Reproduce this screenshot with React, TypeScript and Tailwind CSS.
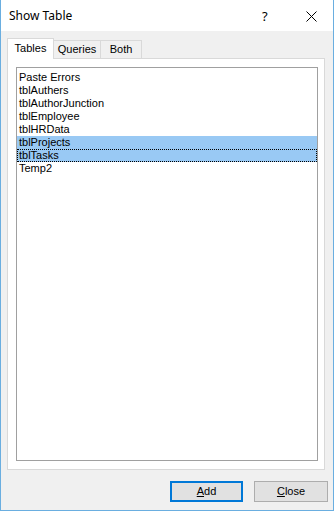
const TABLES = [
  "Paste Errors",
  "tblAuthers",
  "tblAuthorJunction",
  "tblEmployee",
  "tblHRData",
  "tblProjects",
  "tblTasks",
  "Temp2",
];

const SELECTED = ["tblProjects", "tblTasks"];

export default function App() {
  return (
    <div
      className="w-[334px] h-[511px] flex flex-col bg-[#f0f0f0] border border-t-0 border-[#6aaee0] text-black"
      style={{ fontFamily: "'Liberation Sans', Arial, sans-serif" }}
    >
      {/* title bar */}
      <div className="h-[31px] bg-white flex items-center relative shrink-0">
        <span className="pl-2 text-[12px] pt-[1px]" style={{ fontFamily: "'Noto Sans', 'Open Sans', sans-serif" }}>
          Show Table
        </span>
        <span className="absolute left-[261px] top-[7px] text-[13px]" style={{ fontFamily: "'Noto Sans', sans-serif" }}>
          ?
        </span>
        <svg className="absolute left-[305px] top-[11px]" width="11" height="11" viewBox="0 0 11 11">
          <path d="M0.5 0.5L10.5 10.5M10.5 0.5L0.5 10.5" stroke="#000" strokeWidth="1" />
        </svg>
      </div>

      {/* tabs */}
      <div className="flex items-end pl-[6px] pt-[7px] h-[27px] shrink-0 text-[11px]">
        <div className="w-[47px] h-[21px] bg-white border border-b-0 border-[#d9d9d9] flex items-center justify-center relative z-10 -mb-[1px] pb-[2px]">
          Tables
        </div>
        <div className="w-[47px] h-[18px] border border-l-0 border-b-0 border-[#d9d9d9] flex items-center justify-center">
          Queries
        </div>
        <div className="w-[41px] h-[18px] border border-l-0 border-b-0 border-[#d9d9d9] flex items-center justify-center">
          Both
        </div>
      </div>

      {/* tab panel */}
      <div className="ml-[6px] w-[318px] h-[412px] bg-white border border-[#d9d9d9] p-[8px] pr-[6px] shrink-0">
        <div className="w-[302px] h-[394px] border border-[#a0a0a0] pt-[3px] text-[11px]">
          {TABLES.map((t) => {
            const sel = SELECTED.includes(t);
            const focus = t === "tblTasks";
            return (
              <div
                key={t}
                className={`h-[13px] leading-[13px] pl-[2px] ${sel ? "bg-[#99c9f4]" : ""} ${
                  focus ? "outline outline-1 outline-dotted outline-black -outline-offset-1" : ""
                }`}
              >
                {t}
              </div>
            );
          })}
        </div>
      </div>

      {/* buttons */}
      <div className="flex justify-end gap-[11px] pr-[5px] pt-[11px] text-[11px]">
        <button className="w-[73px] h-[21px] bg-[#e1e1e1] border-2 border-[#0078d7] flex items-center justify-center">
          <span>
            <u>A</u>dd
          </span>
        </button>
        <button className="w-[74px] h-[21px] bg-[#e1e1e1] border border-[#adadad] flex items-center justify-center">
          <span>
            <u>C</u>lose
          </span>
        </button>
      </div>
    </div>
  );
}
